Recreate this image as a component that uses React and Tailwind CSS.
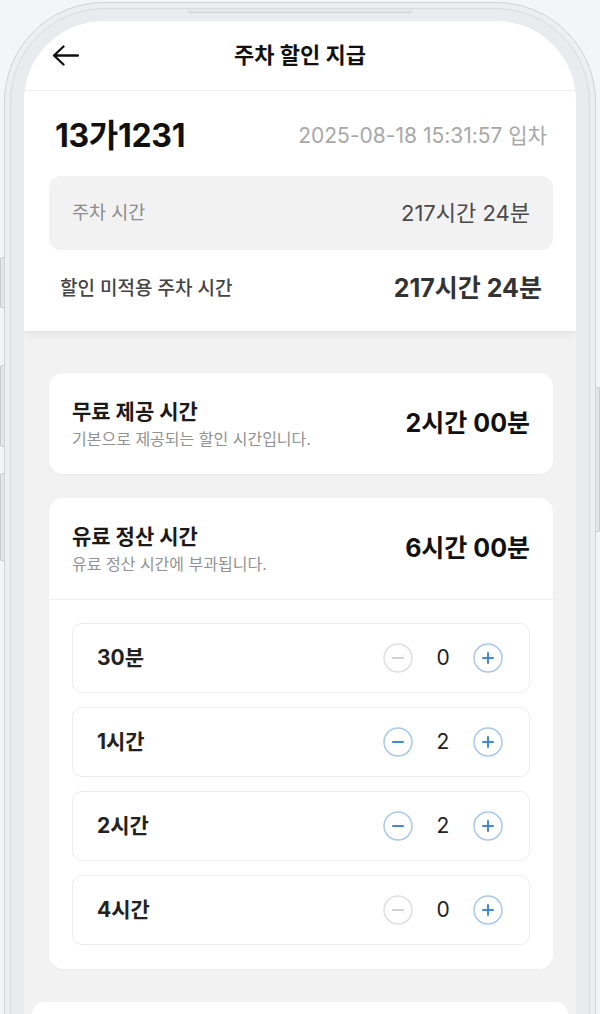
import React from "react";

const font = { fontFamily: 'Inter, "Noto Sans CJK KR", sans-serif' };

// circle stepper button
const StepBtn = ({ type, active }) => {
  const ring = active ? "#a9c9ec" : "#dedfe0";
  const sign = active ? "#4187d2" : "#cfd0d1";
  return (
    <svg width="30" height="30" viewBox="0 0 30 30" className="shrink-0">
      <circle cx="15" cy="15" r="14" fill="white" stroke={ring} strokeWidth="1.5" />
      <line x1="10" y1="15" x2="20" y2="15" stroke={sign} strokeWidth="2" strokeLinecap="round" />
      {type === "plus" && (
        <line x1="15" y1="10" x2="15" y2="20" stroke={sign} strokeWidth="2" strokeLinecap="round" />
      )}
    </svg>
  );
};

const rows = [
  { label: "30분", count: 0 },
  { label: "1시간", count: 2 },
  { label: "2시간", count: 2 },
  { label: "4시간", count: 0 },
];

const CardHead = ({ title, sub, value }) => (
  <div className="h-[101px] px-[23px] flex items-center justify-between">
    <div className="flex flex-col">
      <span className="text-[21px] leading-[26px] font-bold text-[#1a1a1a]">{title}</span>
      <span className="mt-[4px] text-[16px] leading-[20px] text-[#929292]">{sub}</span>
    </div>
    <span className="text-[25px] font-bold text-[#111]">{value}</span>
  </div>
);

export default function App() {
  return (
    <div className="relative w-[600px] h-[1014px] overflow-hidden bg-[#f4f5f6] pt-[2px] px-[4px]" style={font}>
      {/* side buttons */}
      <div className="absolute left-0 top-[257px] h-[51px] w-[6px] rounded-l-[2px] border border-[#c8cacd] bg-[#e4e6e9]" />
      <div className="absolute left-0 top-[365px] h-[82px] w-[6px] rounded-l-[2px] border border-[#c8cacd] bg-[#e4e6e9]" />
      <div className="absolute left-0 top-[473px] h-[88px] w-[6px] rounded-l-[2px] border border-[#c8cacd] bg-[#e4e6e9]" />
      <div className="absolute right-0 top-[387px] h-[145px] w-[6px] rounded-r-[2px] border border-[#c8cacd] bg-[#e4e6e9]" />

      {/* phone frame */}
      <div className="relative z-10 h-[1100px] rounded-t-[100px] border border-[#cfd2d6] bg-[#eceef0] pt-[5px] px-[5px]">
        <div className="relative h-full rounded-t-[94px] border border-[#d9dbde] bg-[#e9ebee] pt-[12px] px-[13px]">
          <div className="absolute top-0 left-1/2 -translate-x-1/2 w-[224px] h-[4px] rounded-b-[4px] border-b border-[#cfd1d4] bg-[#e3e5e8]" />

          {/* screen */}
          <div className="h-full rounded-t-[80px] overflow-hidden bg-[#f2f2f2]">
            {/* header */}
            <div className="relative h-[70px] bg-white border-b border-[#f0f0f0] flex items-center justify-center">
              <svg width="27" height="21" viewBox="0 0 27 21" className="absolute left-[28px] top-[24px]">
                <path d="M2 10.5H26M11.5 1.5L2 10.5L11.5 19.5" fill="none" stroke="#111" strokeWidth="2.3" strokeLinecap="round" strokeLinejoin="round" />
              </svg>
              <span className="text-[22px] font-bold text-[#111]">주차 할인 지급</span>
            </div>

            {/* car info */}
            <div className="bg-white pl-[25px] pr-[23px] pt-[27px] pb-[22px] shadow-[0_4px_8px_rgba(0,0,0,0.06)]">
              <div className="h-[36px] px-[6px] flex items-center justify-between">
                <span className="text-[32px] font-bold text-[#111] tracking-[-0.3px]">13가1231</span>
                <span className="text-[21px] text-[#a8a8a8]">2025-08-18 15:31:57 입차</span>
              </div>
              <div className="mt-[22px] h-[74px] rounded-[12px] bg-[#f2f2f2] px-[23px] flex items-center justify-between">
                <span className="text-[18.5px] text-[#8c8c8c]">주차 시간</span>
                <span className="text-[22px] text-[#4a4a4a]">217시간 24분</span>
              </div>
              <div className="mt-[19px] h-[40px] px-[11px] flex items-center justify-between">
                <span className="text-[19px] font-medium text-[#444]">할인 미적용 주차 시간</span>
                <span className="text-[25px] font-bold text-[#333]">217시간 24분</span>
              </div>
            </div>

            <div className="pl-[25px] pr-[23px] pt-[42px]">
              {/* free time */}
              <div className="rounded-[14px] bg-white shadow-[0_1px_3px_rgba(0,0,0,0.03)]">
                <CardHead title="무료 제공 시간" sub="기본으로 제공되는 할인 시간입니다." value="2시간 00분" />
              </div>

              {/* paid time */}
              <div className="mt-[24px] rounded-[14px] bg-white shadow-[0_1px_3px_rgba(0,0,0,0.03)]">
                <div className="border-b border-[#f0f0f0]">
                  <CardHead title="유료 정산 시간" sub="유료 정산 시간에 부과됩니다." value="6시간 00분" />
                </div>
                <div className="px-[23px] pt-[23px] pb-[24px] flex flex-col gap-[14px]">
                  {rows.map((r) => (
                    <div key={r.label} className="h-[70px] rounded-[10px] border border-[#ededed] pl-[24px] pr-[26px] flex items-center justify-between">
                      <span className="text-[21px] font-bold text-[#222]">{r.label}</span>
                      <div className="flex items-center gap-[15px]">
                        <StepBtn type="minus" active={r.count > 0} />
                        <span className="w-[30px] text-center text-[21px] text-[#222]">{r.count}</span>
                        <StepBtn type="plus" active />
                      </div>
                    </div>
                  ))}
                </div>
              </div>

              {/* bottom bar */}
              <div className="mt-[33px] ml-[-17px] mr-[-15px] h-[60px] rounded-t-[12px] bg-white" />
            </div>
          </div>
        </div>
      </div>
    </div>
  );
}
